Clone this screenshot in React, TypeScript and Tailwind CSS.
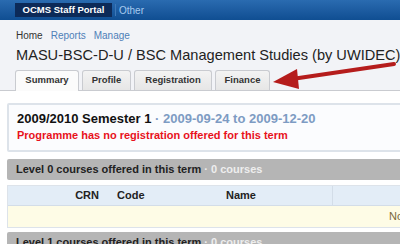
import React from "react";

export default function App() {
  const sans = { fontFamily: '"Liberation Sans", Arial, sans-serif' };
  return (
    <div className="relative w-[400px] h-[244px] overflow-hidden bg-white" style={sans}>
      {/* top bar */}
      <div className="h-[20px] bg-gradient-to-b from-[#2a6bb0] to-[#0f4e92] flex items-center pl-[15px]">
        <div className="h-[14px] w-[97px] bg-[#0c2a58] flex items-center justify-center text-white font-bold text-[9.5px]">
          OCMS Staff Portal
        </div>
        <div className="ml-[3px] h-[12px] w-px bg-[#3d78b8]" />
        <div className="ml-[3px] text-[10px] text-[#a7cbef]">Other</div>
      </div>

      {/* header area */}
      <div className="bg-[#f2f3f7] border-b border-[#c9cbd0]">
        <div className="pl-[16px] pt-[10px] flex gap-[8px] text-[10px] leading-[12px]">
          <span className="text-[#333]">Home</span>
          <span className="text-[#4f80b7]">Reports</span>
          <span className="text-[#4f80b7]">Manage</span>
        </div>
        <div className="pl-[16px] mt-[5px] text-[14.6px] leading-[17px] text-[#222] whitespace-nowrap">
          MASU-BSC-D-U / BSC Management Studies (by UWIDEC)
        </div>
        <div className="flex pl-[15px] mt-[6px] gap-[3px] items-end">
          <div className="h-[21px] w-[64px] bg-[#fbfbfb] border border-b-0 border-[#c9cbd0] rounded-t-[3px] flex items-center justify-center text-[9.5px] font-bold text-[#333] -mb-px pb-px">
            Summary
          </div>
          <div className="h-[20px] w-[49px] bg-gradient-to-b from-[#f3f3f3] to-[#e6e6e6] border border-b-0 border-[#c9cbd0] rounded-t-[3px] flex items-center justify-center text-[9.5px] font-bold text-[#333]">
            Profile
          </div>
          <div className="h-[20px] w-[78px] bg-gradient-to-b from-[#f3f3f3] to-[#e6e6e6] border border-b-0 border-[#c9cbd0] rounded-t-[3px] flex items-center justify-center text-[9.5px] font-bold text-[#333]">
            Registration
          </div>
          <div className="h-[20px] w-[55px] bg-gradient-to-b from-[#f3f3f3] to-[#e6e6e6] border border-b-0 border-[#c9cbd0] rounded-t-[3px] flex items-center justify-center text-[9.5px] font-bold text-[#333]">
            Finance
          </div>
        </div>
      </div>

      {/* content */}
      <div className="pl-[7px] pt-[12px] w-[620px]">
        <div className="border-2 border-[#dde3ea] bg-[#fbfcfe] rounded-[2px] pl-[8px] pt-[6px] pb-[8px]">
          <div className="text-[13px] leading-[16px] font-bold text-[#111] whitespace-nowrap">
            2009/2010 Semester 1 <span className="text-[#7d9bc3]">· 2009-09-24 to 2009-12-20</span>
          </div>
          <div className="mt-[1px] text-[11px] leading-[14px] font-bold text-[#e8121c] whitespace-nowrap">
            Programme has no registration offered for this term
          </div>
        </div>

        <div className="mt-[7px] h-[21px] bg-[#b5b5b5] rounded-[2px] flex items-center pl-[9px] text-[11px] font-bold text-[#222] whitespace-nowrap">
          Level 0 courses offered in this term<span className="text-[#eeeeee]">&nbsp;· 0 courses</span>
        </div>

        <div className="mt-[5px] border border-[#dde3ea]">
          <div className="h-[20px] bg-[#e3edf7] flex items-center text-[11px] font-bold text-[#222] border-b border-[#d3dde8]">
            <div className="w-[94px] text-right pr-[3px]">CRN</div>
            <div className="w-[110px] pl-[15px]">Code</div>
            <div className="w-[121px] pl-[14px] h-full flex items-center border-r border-[#d3dde8]">Name</div>
          </div>
          <div className="h-[21px] bg-[#fefce6] flex items-center text-[11px] text-[#7a6a3a]">
            <div className="pl-[381px] whitespace-nowrap">No courses offered</div>
          </div>
        </div>

        <div className="mt-[4px] h-[21px] bg-[#b5b5b5] rounded-[2px] flex items-center pl-[9px] text-[11px] font-bold text-[#222] whitespace-nowrap">
          Level 1 courses offered in this term<span className="text-[#eeeeee]">&nbsp;· 0 courses</span>
        </div>
      </div>

      {/* annotation arrow */}
      <svg className="absolute left-0 top-0 pointer-events-none" width="400" height="244" viewBox="0 0 400 244">
        <line x1="292" y1="79" x2="394" y2="64" stroke="#b51c1c" strokeWidth="4" strokeLinecap="round" />
        <polygon points="273,82 297,69 299,89" fill="#b51c1c" />
      </svg>
    </div>
  );
}
